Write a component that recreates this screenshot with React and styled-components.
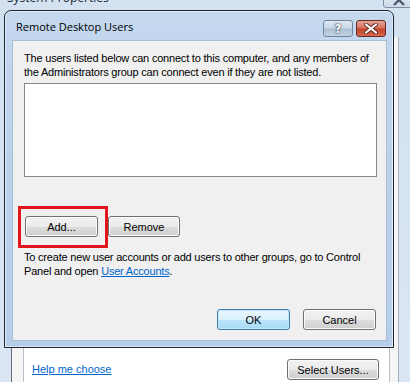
import React from "react"
import styled, { createGlobalStyle } from "styled-components"

const GlobalStyle = createGlobalStyle`
  html, body {
    margin: 0;
    padding: 0;
    background: #d6e3f1;
  }
`

const UI_FONT = `"Liberation Sans", Arial, sans-serif`
const TITLE_FONT = `"Open Sans", "Noto Sans", sans-serif`

// component
const App = () => {
  return (
    <>
      <GlobalStyle />
      <Desktop>
        <ParentWindow>
          <ParentTitleBar>
            <ParentTitle>System Properties</ParentTitle>
            <ParentClose>
              <svg width="14" height="10" viewBox="0 0 14 10">
                <path d="M2 -4 L12 6 M12 -4 L2 6" stroke="#4a5a6e" strokeWidth="2.4" fill="none" />
              </svg>
            </ParentClose>
          </ParentTitleBar>
          <ParentClient>
            <TabPanel>
              <Link>Help me choose</Link>
              <Button $width={92}>Select Users...</Button>
            </TabPanel>
          </ParentClient>
        </ParentWindow>

        <Dialog>
          <TitleBar>
            <Title>Remote Desktop Users</Title>
            <CaptionButtons>
              <HelpButton>?</HelpButton>
              <CloseButton>
                <svg width="16" height="11" viewBox="0 0 16 11">
                  <path d="M3 1.5 L13 9.5 M13 1.5 L3 9.5" stroke="#5a2a22" strokeWidth="4" strokeLinecap="round" fill="none" />
                  <path d="M3 1.5 L13 9.5 M13 1.5 L3 9.5" stroke="#ffffff" strokeWidth="2.2" strokeLinecap="round" fill="none" />
                </svg>
              </CloseButton>
            </CaptionButtons>
          </TitleBar>
          <Client>
            <Text>
              The users listed below can connect to this computer, and any members of
              <br />
              the Administrators group can connect even if they are not listed.
            </Text>
            <ListBox />
            <ButtonRow>
              <Highlight>
                <Button $width={73}>Add...</Button>
              </Highlight>
              <Button $width={72}>Remove</Button>
            </ButtonRow>
            <HintText>
              To create new user accounts or add users to other groups, go to Control
              <br />
              Panel and open <Link>User Accounts</Link>.
            </HintText>
            <FooterRow>
              <Button $width={73} $default>OK</Button>
              <Button $width={73}>Cancel</Button>
            </FooterRow>
          </Client>
        </Dialog>
      </Desktop>
    </>
  )
}

export default App

// styles
const Desktop = styled.div`
  position: relative;
  width: 410px;
  height: 382px;
  overflow: hidden;
  font-family: ${UI_FONT};
  font-size: 11px;
  color: #000;
  background: linear-gradient(#d3e1f0, #dae6f3);
`

const ParentWindow = styled.div`
  display: flex;
  flex-direction: column;
  height: 100%;
`

const ParentTitleBar = styled.div`
  display: flex;
  align-items: flex-start;
  height: 37px;
  flex-shrink: 0;
`

const ParentTitle = styled.span`
  margin: -10px 0 0 7px;
  font-family: ${TITLE_FONT};
  font-size: 12px;
  line-height: 16px;
  color: #1e2a36;
`

const ParentClose = styled.div`
  display: flex;
  justify-content: center;
  margin: -10px -4px 0 auto;
  width: 31px;
  height: 18px;
  box-sizing: border-box;
  border: 1px solid #7d8ea3;
  border-radius: 3px;
  background: linear-gradient(#e8eef6, #cfdbe9);
  overflow: hidden;
  svg {
    margin-top: 8px;
  }
`

const ParentClient = styled.div`
  flex: 1;
  display: flex;
  margin: 0 11px 0 11px;
  padding: 0 8px 0 11px;
  border-left: 1px solid #6e6e6e;
  border-right: 1px solid #a8b0bb;
  background: #f5f5f5;
`

const TabPanel = styled.div`
  flex: 1;
  display: flex;
  align-items: flex-end;
  justify-content: space-between;
  padding: 0 10px 2px 8px;
  border: 1px solid #b8c0cb;
  border-bottom: none;
  background: #ffffff;
  & > span {
    margin-bottom: 5px;
  }
`

const Link = styled.span`
  color: #0066cc;
  text-decoration: underline;
  cursor: pointer;
`

const Dialog = styled.div`
  position: absolute;
  left: 4px;
  top: 10px;
  width: 390px;
  height: 338px;
  box-sizing: border-box;
  display: flex;
  flex-direction: column;
  padding: 0 6px 6px 7px;
  border: 1px solid #1c2633;
  border-radius: 7px 7px 0 0;
  background: linear-gradient(#c4d8ee, #bcd2eb 40%, #b7cee9);
  box-shadow: inset 0 0 0 1px rgba(255, 255, 255, 0.55);
`

const TitleBar = styled.div`
  display: flex;
  align-items: flex-start;
  height: 29px;
  flex-shrink: 0;
`

const Title = styled.span`
  margin: 8px 0 0 4px;
  font-family: ${TITLE_FONT};
  font-size: 11px;
  line-height: 16px;
  color: #000;
`

const CaptionButtons = styled.div`
  display: flex;
  gap: 3px;
  margin: 9px 1px 0 auto;
`

const CaptionButton = styled.div`
  display: flex;
  align-items: center;
  justify-content: center;
  width: 30px;
  height: 17px;
  box-sizing: border-box;
  border-radius: 3px;
`

const HelpButton = styled(CaptionButton)`
  border: 1px solid #6f849c;
  background: linear-gradient(#dfe8f2, #c9d7e6 48%, #aebfd3 52%, #c3d3e4);
  font-family: "DejaVu Sans", sans-serif;
  font-weight: bold;
  font-size: 12px;
  color: #ffffff;
  text-shadow: 0 0 1px #3b4b5e, 0 0 1px #3b4b5e, 0 0 2px #3b4b5e;
`

const CloseButton = styled(CaptionButton)`
  border: 1px solid #6b2a23;
  background: linear-gradient(#e7a597, #d4705c 48%, #c2412a 52%, #d46a4f);
`

const Client = styled.div`
  flex: 1;
  display: flex;
  flex-direction: column;
  padding: 10px 9px 0 11px;
  background: #f0f0f0;
  border: 1px solid #a9bdd4;
  box-sizing: border-box;
`

const Text = styled.p`
  margin: 0;
  line-height: 14px;
  letter-spacing: -0.2px;
  white-space: nowrap;
`

const ListBox = styled.div`
  margin-top: 4px;
  height: 94px;
  box-sizing: border-box;
  border: 1px solid #828790;
  background: #ffffff;
`

const ButtonRow = styled.div`
  display: flex;
  gap: 10px;
  margin: 39px 0 0 1px;
`

const Highlight = styled.div`
  position: relative;
  display: flex;
  &::after {
    content: "";
    position: absolute;
    left: -7px;
    top: -10px;
    right: -10px;
    bottom: -11px;
    border: 3px solid #e3141c;
    pointer-events: none;
  }
`

const HintText = styled(Text)`
  margin-top: 13px;
`

const FooterRow = styled.div`
  display: flex;
  justify-content: flex-end;
  gap: 13px;
  margin-top: 31px;
  padding-right: 1px;
`

const Button = styled.button`
  width: ${(p) => p.$width}px;
  height: 21px;
  padding: 0;
  box-sizing: border-box;
  font-family: ${UI_FONT};
  font-size: 11px;
  color: #000;
  border-radius: 3px;
  border: 1px solid ${(p) => (p.$default ? "#3c7fb1" : "#707070")};
  background: ${(p) =>
    p.$default
      ? "linear-gradient(#eaf6fd, #d9f0fc 50%, #bee6fd 50%, #a7d9f5)"
      : "linear-gradient(#f2f2f2, #ebebeb 50%, #dddddd 50%, #cfcfcf)"};
  box-shadow: inset 0 0 0 1px ${(p) => (p.$default ? "#c8e6f8" : "#fbfbfb")};
`
